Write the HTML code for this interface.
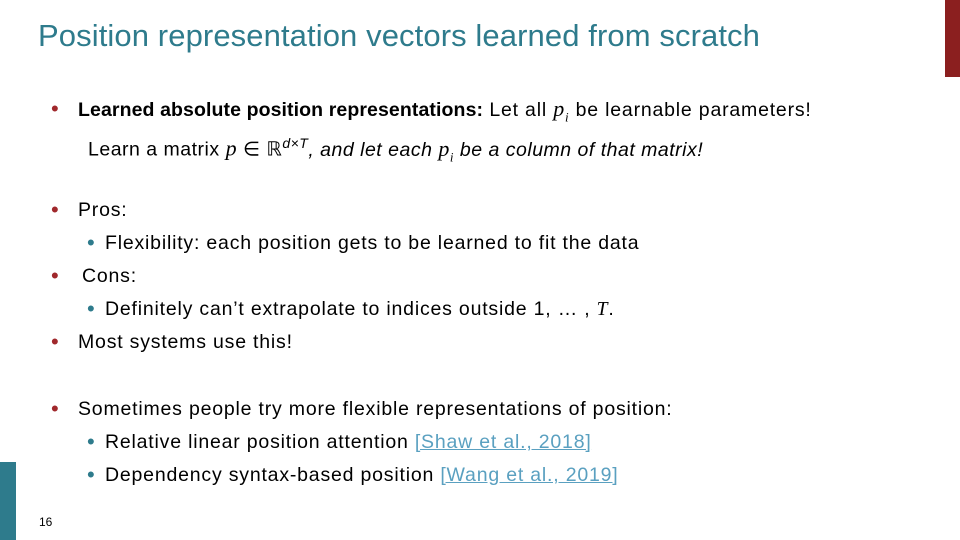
<!DOCTYPE html>
<html><head><style>
body{margin:0;width:960px;height:540px;position:relative;background:#fff;font-family:"Liberation Sans",sans-serif;color:#000;overflow:hidden}
.t{position:absolute;left:38px;top:18px;font-size:31px;color:#2e7b8c;letter-spacing:0.1px}
.l{position:absolute;font-size:19.5px;white-space:nowrap;letter-spacing:0.8px;line-height:24px}
.l b{letter-spacing:0.1px}
.b{position:absolute;font-size:22px;line-height:24px}
.r{color:#a0282c}.g{color:#2e7b8c}
a{color:#5aa0c0;text-decoration:underline}
i.m{font-family:"Liberation Serif",serif;font-size:22px}
</style></head><body>
<div style="position:absolute;left:945px;top:0;width:15px;height:77px;background:#8b1f1f"></div>
<div style="position:absolute;left:0;top:462px;width:16px;height:78px;background:#2e7b8c"></div>
<div class="t">Position representation vectors learned from scratch</div>
<div class="b r" style="left:51px;top:97px">•</div>
<div class="l" style="left:78px;top:97px"><b>Learned absolute position representations:</b> Let all <i class="m">p<sub style="font-size:13px">i</sub></i> be learnable parameters!</div>
<div class="l" style="left:88px;top:131px;letter-spacing:0.5px">Learn a matrix <i class="m">p</i> ∈ ℝ<sup style="font-size:14px"><i>d×T</i></sup><i>, and let each <span style="font-family:'Liberation Serif',serif;font-size:22px">p<sub style="font-size:13px">i</sub></span> be a column of that matrix!</i></div>
<div class="b r" style="left:51px;top:198px">•</div>
<div class="l" style="left:78px;top:198px">Pros:</div>
<div class="b g" style="left:87px;top:231px">•</div>
<div class="l" style="left:105px;top:231px">Flexibility: each position gets to be learned to fit the data</div>
<div class="b r" style="left:51px;top:264px">•</div>
<div class="l" style="left:82px;top:264px">Cons:</div>
<div class="b g" style="left:87px;top:297px">•</div>
<div class="l" style="left:105px;top:297px">Definitely can’t extrapolate to indices outside 1, … , <i style="font-family:'Liberation Serif',serif">T</i>.</div>
<div class="b r" style="left:51px;top:330px">•</div>
<div class="l" style="left:78px;top:330px">Most systems use this!</div>
<div class="b r" style="left:51px;top:397px">•</div>
<div class="l" style="left:78px;top:397px">Sometimes people try more flexible representations of position:</div>
<div class="b g" style="left:87px;top:430px">•</div>
<div class="l" style="left:105px;top:430px">Relative linear position attention <a>[Shaw et al., 2018]</a></div>
<div class="b g" style="left:87px;top:463px">•</div>
<div class="l" style="left:105px;top:463px">Dependency syntax-based position <a>[Wang et al., 2019]</a></div>
<div style="position:absolute;left:39px;top:515px;font-size:12px">16</div>
</body></html>
